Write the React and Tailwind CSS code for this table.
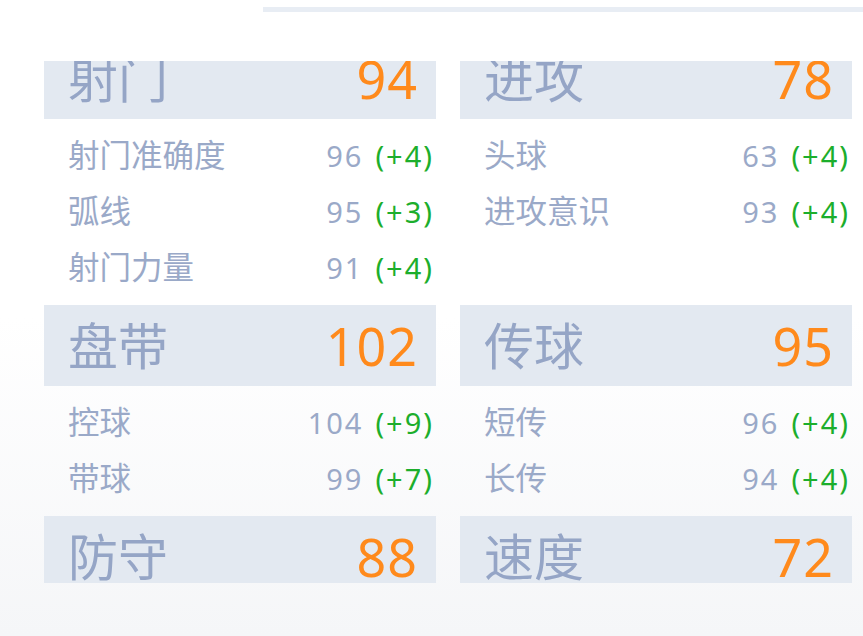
import React from 'react';

const sections = [
  {
    title: '射门',
    value: 94,
    items: [
      { name: '射门准确度', value: 96, bonus: 4 },
      { name: '弧线', value: 95, bonus: 3 },
      { name: '射门力量', value: 91, bonus: 4 },
    ],
  },
  {
    title: '进攻',
    value: 78,
    items: [
      { name: '头球', value: 63, bonus: 4 },
      { name: '进攻意识', value: 93, bonus: 4 },
    ],
  },
  {
    title: '盘带',
    value: 102,
    items: [
      { name: '控球', value: 104, bonus: 9 },
      { name: '带球', value: 99, bonus: 7 },
    ],
  },
  {
    title: '传球',
    value: 95,
    items: [
      { name: '短传', value: 96, bonus: 4 },
      { name: '长传', value: 94, bonus: 4 },
    ],
  },
  { title: '防守', value: 88, items: [] },
  { title: '速度', value: 72, items: [] },
];

const font = { fontFamily: '"Noto Sans", "Noto Sans CJK SC", sans-serif' };

const StatSection = ({ section }) => (
  <div className="flex flex-col">
    {/* category header */}
    <div className="h-[81px] bg-[#e3e9f1] flex items-center justify-between pl-[24px] pr-[18px]">
      <span className="text-[50px] leading-none text-[#95a5c6]">{section.title}</span>
      <span className="text-[52px] leading-none tracking-[1px] text-[#ff8a1c]">{section.value}</span>
    </div>
    <div className="pt-[8px] pb-[10px]">
      {section.items.map((item) => (
        <div key={item.name} className="h-[56px] flex items-center justify-between pl-[24px] pr-[2px]">
          <span className="text-[31.5px] text-[#9aa9c8]">{item.name}</span>
          <span className="text-[29px] tracking-[2px] translate-y-[1px]">
            <span className="text-[#9aa9c8]">{item.value}</span>
            <span className="text-[#1cae2c] ml-[12px]">(+{item.bonus})</span>
          </span>
        </div>
      ))}
    </div>
  </div>
);

const App = () => {
  return (
    <div
      className="w-[863px] h-[636px] overflow-hidden flex flex-col bg-gradient-to-b from-white via-white to-[#f5f6f8]"
      style={font}
    >
      {/* top bar */}
      <div className="h-[61px] shrink-0 bg-white pt-[7px] pl-[263px]">
        <div className="h-[5px] bg-[#e8edf4]" />
      </div>

      {/* scroll area */}
      <div className="h-[522px] shrink-0 overflow-hidden">
        <div className="-mt-[23px] pl-[44px] pr-[11px] grid grid-cols-2 gap-x-[24px]">
          {sections.map((s) => (
            <StatSection key={s.title} section={s} />
          ))}
        </div>
      </div>

      <div className="flex-1" />
    </div>
  );
};

export default App;
